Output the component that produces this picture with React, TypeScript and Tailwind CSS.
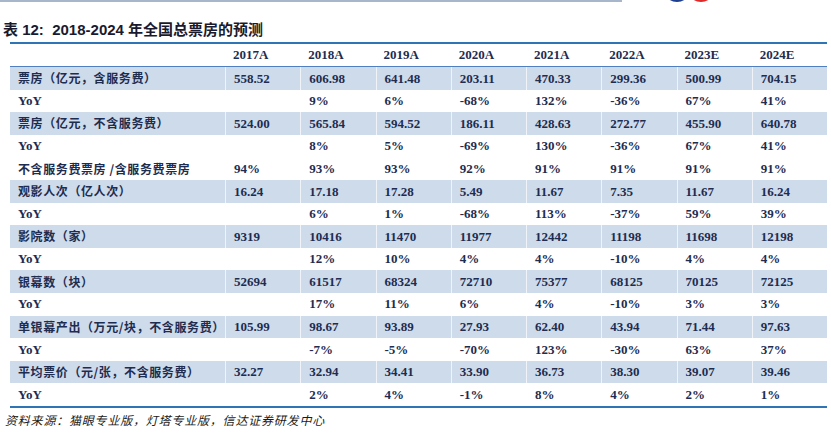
import React from "react";

type Row = { label: string; vals: string[]; shaded: boolean; yoy?: boolean };

const rows: Row[] = [
  { label: "票房（亿元，含服务费）", vals: ["558.52", "606.98", "641.48", "203.11", "470.33", "299.36", "500.99", "704.15"], shaded: true },
  { label: "YoY", vals: ["", "9%", "6%", "-68%", "132%", "-36%", "67%", "41%"], shaded: false, yoy: true },
  { label: "票房（亿元，不含服务费）", vals: ["524.00", "565.84", "594.52", "186.11", "428.63", "272.77", "455.90", "640.78"], shaded: true },
  { label: "YoY", vals: ["", "8%", "5%", "-69%", "130%", "-36%", "67%", "41%"], shaded: false, yoy: true },
  { label: "不含服务费票房 /含服务费票房", vals: ["94%", "93%", "93%", "92%", "91%", "91%", "91%", "91%"], shaded: false },
  { label: "观影人次（亿人次）", vals: ["16.24", "17.18", "17.28", "5.49", "11.67", "7.35", "11.67", "16.24"], shaded: true },
  { label: "YoY", vals: ["", "6%", "1%", "-68%", "113%", "-37%", "59%", "39%"], shaded: false, yoy: true },
  { label: "影院数（家）", vals: ["9319", "10416", "11470", "11977", "12442", "11198", "11698", "12198"], shaded: true },
  { label: "YoY", vals: ["", "12%", "10%", "4%", "4%", "-10%", "4%", "4%"], shaded: false, yoy: true },
  { label: "银幕数（块）", vals: ["52694", "61517", "68324", "72710", "75377", "68125", "70125", "72125"], shaded: true },
  { label: "YoY", vals: ["", "17%", "11%", "6%", "4%", "-10%", "3%", "3%"], shaded: false, yoy: true },
  { label: "单银幕产出（万元/块，不含服务费）", vals: ["105.99", "98.67", "93.89", "27.93", "62.40", "43.94", "71.44", "97.63"], shaded: true },
  { label: "YoY", vals: ["", "-7%", "-5%", "-70%", "123%", "-30%", "63%", "37%"], shaded: false, yoy: true },
  { label: "平均票价（元/张，不含服务费）", vals: ["32.27", "32.94", "34.41", "33.90", "36.73", "38.30", "39.07", "39.46"], shaded: true },
  { label: "YoY", vals: ["", "2%", "4%", "-1%", "8%", "4%", "2%", "1%"], shaded: false, yoy: true },
];

const years = ["2017A", "2018A", "2019A", "2020A", "2021A", "2022A", "2023E", "2024E"];

const serif = "font-['Liberation_Serif','Noto_Sans_CJK_SC',serif]";
const cjk = "font-['Noto_Sans_CJK_SC',serif]";

export default function App() {
  return (
    <div className="w-[831px] h-[442px] bg-white relative overflow-hidden text-[#1e2c50]">
      <div className="flex items-start h-[21px]">
        <div className="w-[622px] h-[1.5px] bg-[#a8b6cc]" />
        <svg className="ml-[43px]" width="48" height="3" viewBox="0 0 48 3">
          <ellipse cx="12" cy="-7" rx="11.5" ry="9" fill="#1d3f8f" />
          <ellipse cx="36" cy="-7" rx="11.5" ry="9" fill="#e02a2a" />
          <ellipse cx="12" cy="-8" rx="9.5" ry="8" fill="#ffffff" />
          <ellipse cx="36" cy="-8" rx="9.5" ry="8" fill="#ffffff" />
        </svg>
      </div>
      <div className="pl-[3px] h-[18px] leading-[18px] text-[15px] font-bold font-['Liberation_Sans','Noto_Sans_CJK_SC',sans-serif] text-[#1a1a2e]">
        表 12:&nbsp;&nbsp;2018-2024 年全国总票房的预测
      </div>
      <div className="ml-[10px] w-[817px] mt-[3px] border-t-2 border-[#2f75b6] border-b-2 border-b-[#2f75b6]">
        <div className={`grid grid-cols-[215px_repeat(8,1fr)] h-[23px] items-center border-b-[1.5px] border-[#4f7fbf] ${serif} text-[13px] font-bold`}>
          <div />
          {years.map((y) => (
            <div key={y} className="pl-2 h-full flex items-center">{y}</div>
          ))}
        </div>
        {rows.map((r, i) => (
          <div
            key={i}
            className={`grid grid-cols-[215px_repeat(8,1fr)] h-[22.6px] ${r.shaded ? "bg-[#cddbea]" : "bg-white"}`}
          >
            <div
              className={`pl-2 flex items-center font-bold ${
                r.yoy
                  ? `${serif} text-[13px]`
                  : `${cjk} text-[12px] tracking-[0.6px]`
              }`}
            >
              {r.label}
            </div>
            {r.vals.map((v, j) => (
              <div key={j} className={`pl-2 flex items-center border-l border-white/70 ${serif} text-[13px] font-bold`}>
                {v}
              </div>
            ))}
          </div>
        ))}
      </div>
      <div className={`pl-[5px] mt-[4px] text-[12px] italic ${cjk} text-[#1a1a1a] tracking-[0.8px] leading-[16px]`}>
        资料来源：猫眼专业版，灯塔专业版，信达证券研发中心
      </div>
    </div>
  );
}
